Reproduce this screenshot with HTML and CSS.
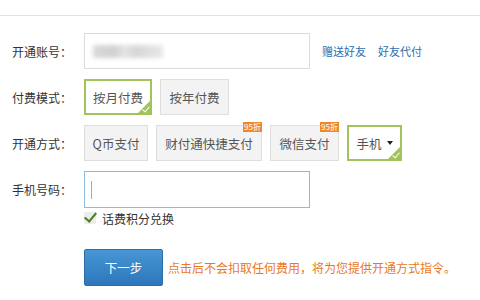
FILE: index.html
```html
<!DOCTYPE html>
<html lang="zh-CN">
<head>
  <meta charset="UTF-8">
  <title>开通</title>
  <link rel="stylesheet" href="styles.css">
</head>
<body>
  <div class="top"></div>
  <div class="form">
    <div class="row">
      <div class="label">开通账号：</div>
      <div class="input account"><span class="blur"></span></div>
      <a class="link" href="#">赠送好友</a>
      <a class="link" href="#">好友代付</a>
    </div>
    <div class="row">
      <div class="label">付费模式：</div>
      <div class="btns">
        <div class="opt on" style="width:68px">按月付费<i class="corner"></i></div>
        <div class="opt" style="width:69px">按年付费</div>
      </div>
    </div>
    <div class="row">
      <div class="label">开通方式：</div>
      <div class="btns">
        <div class="opt" style="width:64px">Q币支付</div>
        <div class="opt" style="width:106px">财付通快捷支付<span class="badge">95折</span></div>
        <div class="opt" style="width:69px">微信支付<span class="badge">95折</span></div>
        <div class="opt on" style="width:55px">手机<span class="arrow"></span><i class="corner"></i></div>
      </div>
    </div>
    <div class="row phone-row">
      <div class="label">手机号码：</div>
      <div class="input phone"><span class="caret"></span></div>
    </div>
    <div class="check-row">
      <span class="check"></span>话费积分兑换
    </div>
    <div class="submit-row">
      <div class="next">下一步</div>
      <span class="tip">点击后不会扣取任何费用，将为您提供开通方式指令。</span>
    </div>
  </div>
</body>
</html>
```

FILE: styles.css
```css
*{
  margin: 0;
  padding: 0;
  box-sizing: border-box;
}
body{
  width: 480px;
  height: 300px;
  background: #fff;
  font-family: "Noto Sans CJK SC", "Liberation Sans", sans-serif;
  font-size: 13px;
  color: #333;
  overflow: hidden;
}
.top{
  height: 16px;
  border-bottom: 1px solid #e3e3e3;
}
.form{
  padding: 17px 0 0 12px;
}
.row{
  display: flex;
  align-items: center;
  height: 36px;
  margin-bottom: 10px;
}
.label{
  width: 72px;
  font-size: 12px;
  color: #333;
}
.input{
  width: 226px;
  height: 36px;
  border: 1px solid #dcdcdc;
  background: #fff;
  display: flex;
  align-items: center;
  padding-left: 8px;
}
.blur{
  display: block;
  width: 70px;
  height: 13px;
  background: linear-gradient(90deg, #dadada 0, #d0d0d0 30%, #e4e4e4 45%, #d6d6d6 60%, #e8e8e8 100%);
  filter: blur(2px);
}
.link{
  font-size: 11px;
  color: #2f6eaf;
  text-decoration: none;
  margin-left: 12px;
}
.btns{
  display: flex;
  gap: 8px;
}
.opt{
  position: relative;
  height: 36px;
  display: flex;
  align-items: center;
  justify-content: center;
  background: #f3f3f3;
  border: 1px solid #dedede;
  font-size: 12.5px;
  color: #555;
}
.opt.on{
  background: #fff;
  border: 2px solid #a2c25c;
}
.corner{
  position: absolute;
  right: 0;
  bottom: 0;
  width: 0;
  height: 0;
  border-style: solid;
  border-width: 0 0 12px 12px;
  border-color: transparent transparent #a2c25c transparent;
}
.corner::after{
  content: '';
  position: absolute;
  right: 2px;
  top: 4px;
  width: 3px;
  height: 6px;
  border: solid #fff;
  border-width: 0 1px 1px 0;
  transform: rotate(40deg);
}
.arrow{
  display: inline-block;
  margin-left: 5px;
  border-style: solid;
  border-width: 4px 3px 0 3px;
  border-color: #222 transparent transparent transparent;
}
.badge{
  position: absolute;
  top: -4px;
  right: -1px;
  background: #f0882a;
  color: #fff;
  font-size: 8px;
  line-height: 10px;
  padding: 0 1px;
}
.phone-row{
  height: 37px;
  margin-bottom: 2px;
}
.input.phone{
  height: 37px;
  border-color: #8dbbe0;
  padding-left: 6px;
}
.caret{
  width: 1px;
  height: 18px;
  background: #aaa;
}
.check-row{
  display: flex;
  align-items: center;
  padding-left: 72px;
  font-size: 12px;
  color: #333;
  height: 16px;
}
.check{
  position: relative;
  width: 12px;
  height: 12px;
  background: #ececec;
  border-radius: 1px;
  margin-right: 6px;
}
.check::after{
  content: '';
  position: absolute;
  left: 3px;
  top: -2px;
  width: 5px;
  height: 10px;
  border: solid #4e7d1f;
  border-width: 0 2px 2px 0;
  transform: rotate(40deg);
}
.submit-row{
  display: flex;
  align-items: center;
  padding-left: 72px;
  margin-top: 23px;
}
.next{
  width: 79px;
  height: 37px;
  display: flex;
  align-items: center;
  justify-content: center;
  background: linear-gradient(#4896d6, #2b77ba);
  border: 1px solid #2a6ea8;
  border-radius: 2px;
  color: #fff;
  font-size: 12.5px;
}
.tip{
  margin-left: 5px;
  font-size: 12px;
  color: #e8791f;
}
```
